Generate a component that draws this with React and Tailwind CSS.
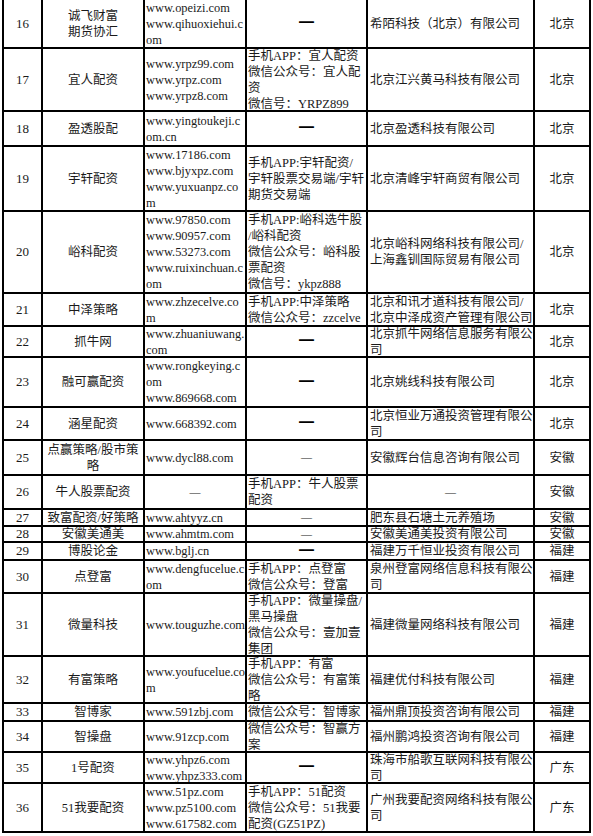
import React from 'react';

// B = heavy dash, T = thin dash
const B = 'B';
const T = 'T';

const rows = [
  { n: 16, h: 49, name: ['诚飞财富', '期货协汇'], web: ['www.opeizi.com', 'www.qihuoxiehui.c', 'om'], app: B, co: ['希陌科技（北京）有限公司'], area: '北京' },
  { n: 17, h: 63, name: ['宜人配资'], web: ['www.yrpz99.com', 'www.yrpz.com', 'www.yrpz8.com'], app: ['手机APP：宜人配资', '微信公众号：宜人配', '资', '微信号：YRPZ899'], co: ['北京江兴黄马科技有限公司'], area: '北京' },
  { n: 18, h: 35, name: ['盈透股配'], web: ['www.yingtoukeji.c', 'om.cn'], app: B, co: ['北京盈透科技有限公司'], area: '北京' },
  { n: 19, h: 65, name: ['宇轩配资'], web: ['www.17186.com', 'www.bjyxpz.com', 'www.yuxuanpz.co', 'm'], app: ['手机APP:宇轩配资/', '宇轩股票交易端/宇轩', '期货交易端'], co: ['北京清峰宇轩商贸有限公司'], area: '北京' },
  { n: 20, h: 82, name: ['峪科配资'], web: ['www.97850.com', 'www.90957.com', 'www.53273.com', 'www.ruixinchuan.c', 'om'], app: ['手机APP:峪科选牛股', '/峪科配资', '微信公众号：峪科股', '票配资', '微信号：ykpz888'], co: ['北京峪科网络科技有限公司/', '上海鑫钏国际贸易有限公司'], area: '北京' },
  { n: 21, h: 33, name: ['中泽策略'], web: ['www.zhzecelve.co', 'm'], app: ['手机APP:中泽策略', '微信公众号：zzcelve'], co: ['北京和讯才道科技有限公司/', '北京中泽成资产管理有限公司'], area: '北京' },
  { n: 22, h: 31, name: ['抓牛网'], web: ['www.zhuaniuwang.', 'com'], app: B, co: ['北京抓牛网络信息服务有限公', '司'], area: '北京' },
  { n: 23, h: 50, name: ['融可赢配资'], web: ['www.rongkeying.c', 'om', 'www.869668.com'], app: B, co: ['北京姚线科技有限公司'], area: '北京' },
  { n: 24, h: 33, name: ['涵星配资'], web: ['www.668392.com'], app: B, co: ['北京恒业万通投资管理有限公', '司'], area: '北京' },
  { n: 25, h: 35, name: ['点赢策略/股市策', '略'], web: ['www.dycl88.com'], app: T, co: ['安徽辉台信息咨询有限公司'], area: '安徽' },
  { n: 26, h: 34, name: ['牛人股票配资'], web: T, app: ['手机APP：牛人股票', '配资'], co: T, area: '安徽' },
  { n: 27, h: 17, name: ['致富配资/好策略'], web: ['www.ahtyyz.cn'], app: T, co: ['肥东县石塘土元养殖场'], area: '安徽' },
  { n: 28, h: 16, name: ['安徽美通美'], web: ['www.ahmtm.com'], app: T, co: ['安徽美通美投资有限公司'], area: '安徽' },
  { n: 29, h: 18, name: ['博股论金'], web: ['www.bglj.cn'], app: B, co: ['福建万千恒业投资有限公司'], area: '福建' },
  { n: 30, h: 33, name: ['点登富'], web: ['www.dengfucelue.c', 'om'], app: ['手机APP：点登富', '微信公众号：登富'], co: ['泉州登富网络信息科技有限公', '司'], area: '福建' },
  { n: 31, h: 63, name: ['微量科技'], web: ['www.touguzhe.com'], app: ['手机APP：微量操盘/', '黑马操盘', '微信公众号：壹加壹', '集团'], co: ['福建微量网络科技有限公司'], area: '福建' },
  { n: 32, h: 47, name: ['有富策略'], web: ['www.youfucelue.co', 'm'], app: ['手机APP：有富', '微信公众号：有富策', '略'], co: ['福建优付科技有限公司'], area: '福建' },
  { n: 33, h: 18, name: ['智博家'], web: ['www.591zbj.com'], app: ['微信公众号：智博家'], co: ['福州鼎顶投资咨询有限公司'], area: '福建' },
  { n: 34, h: 31, name: ['智操盘'], web: ['www.91zcp.com'], app: ['微信公众号：智赢方', '案'], co: ['福州鹏鸿投资咨询有限公司'], area: '福建' },
  { n: 35, h: 31, name: ['1号配资'], web: ['www.yhpz6.com', 'www.yhpz333.com'], app: B, co: ['珠海市船歌互联网科技有限公', '司'], area: '广东' },
  { n: 36, h: 49, name: ['51我要配资'], web: ['www.51pz.com', 'www.pz5100.com', 'www.617582.com'], app: ['手机APP：51配资', '微信公众号：51我要', '配资(GZ51PZ)'], co: ['广州我要配资网络科技有限公', '司'], area: '广东' },
];

function Dash({ kind }) {
  if (kind === B) {
    return <span className="font-bold text-[15px] leading-none text-black">━</span>;
  }
  return <span className="text-[11px] leading-none text-[#222]">—</span>;
}

// left-aligned stack of lines, or a centred dash
function Lines({ value, className = '' }) {
  if (value === B || value === T) {
    return (
      <div className="flex h-full items-center justify-center">
        <Dash kind={value} />
      </div>
    );
  }
  return (
    <div className={`flex h-full flex-col justify-center whitespace-nowrap ${className}`}>
      {value.map((line, i) => (
        <div key={i}>{line}</div>
      ))}
    </div>
  );
}

export default function App() {
  return (
    <div
      className="min-h-[836px] bg-white pl-[2px] text-[12.5px] leading-[16px] text-[#1a1a1a]"
      style={{ fontFamily: '"Liberation Serif", "Noto Sans CJK SC", serif' }}
    >
      <div className="w-[589px] border-l-2 border-black">
        {rows.map((r) => (
          <div key={r.n} className="flex border-b-2 border-black" style={{ height: r.h }}>
            <div className="flex w-[39px] shrink-0 items-center justify-center border-r-2 border-black text-[13px]">
              {r.n}
            </div>
            <div className="flex w-[102px] shrink-0 flex-col items-center justify-center border-r-2 border-black text-center whitespace-nowrap">
              {r.name.map((line, i) => (
                <div key={i}>{line}</div>
              ))}
            </div>
            <div className="w-[102px] shrink-0 overflow-hidden border-r-2 border-black">
              <Lines value={r.web} className="pl-[1px] text-[12.4px]" />
            </div>
            <div className="w-[121px] shrink-0 overflow-hidden border-r-2 border-black">
              <Lines value={r.app} className="pl-[1px]" />
            </div>
            <div className="w-[167px] shrink-0 overflow-hidden border-r-2 border-black">
              <Lines value={r.co} className="pl-[2px]" />
            </div>
            <div className="flex w-[56px] shrink-0 items-center justify-center border-r-2 border-black">
              {r.area}
            </div>
          </div>
        ))}
      </div>
    </div>
  );
}
